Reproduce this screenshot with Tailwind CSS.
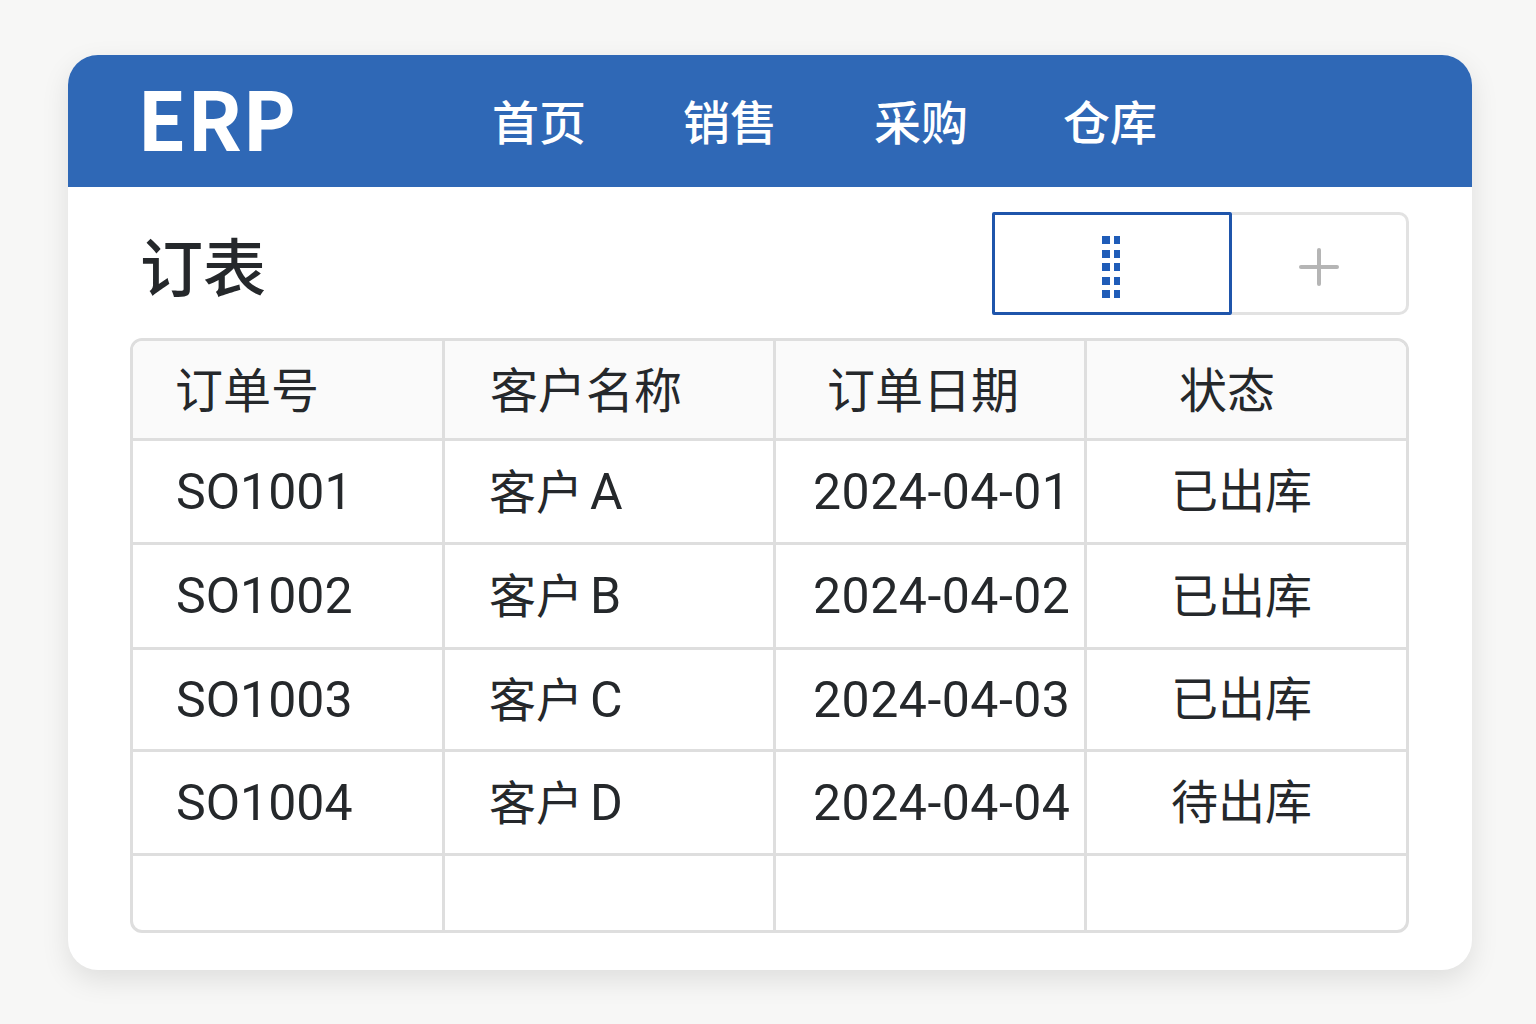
<!DOCTYPE html>
<html lang="zh-CN">
<head>
    <meta charset="UTF-8">
    <title>ERP</title>
    <script src="https://cdn.jsdelivr.net/npm/@tailwindcss/browser@4"></script>
</head>
<body class="bg-[#f7f7f6] font-['Roboto','Noto_Sans_CJK_SC',sans-serif] text-[#25282b]">
    <div class="w-[1536px] h-[1024px] pt-[55px] pl-[68px]">
        <div class="w-[1404px] h-[915px] bg-white rounded-[30px] shadow-[0_10px_28px_rgba(0,0,0,0.10)] overflow-hidden">
            <header class="h-[132px] bg-[#2f68b6] flex items-center text-white">
                <div class="w-[424px] pl-[69px] text-[81px] leading-none font-semibold font-['Noto_Sans_CJK_SC',sans-serif] -mt-[11px]">ERP</div>
                <nav class="flex text-[47px] leading-none font-medium mt-[4px]">
                    <a class="w-[191px]">首页</a>
                    <a class="w-[191px]">销售</a>
                    <a class="w-[189px]">采购</a>
                    <a>仓库</a>
                </nav>
            </header>
            <div class="h-[151px] pl-[72px] pr-[63px] pt-[25px] flex justify-between items-start">
                <h1 class="text-[63px] leading-none font-medium mt-[26px]">订表</h1>
                <div class="flex h-[103px]">
                    <button class="w-[240px] border-[3px] border-[#1f55ab] rounded-[2px] flex items-center justify-center">
                        <svg class="mt-[6px]" width="20" height="62" viewBox="0 0 20 62" fill="#1f5cb8">
                            <rect x="0" y="0" width="8" height="8"/><rect x="12" y="0" width="6" height="8"/>
                            <rect x="0" y="14" width="8" height="8"/><rect x="12" y="14" width="6" height="8"/>
                            <rect x="0" y="27" width="8" height="8"/><rect x="12" y="27" width="6" height="8"/>
                            <rect x="0" y="41" width="8" height="8"/><rect x="12" y="41" width="6" height="8"/>
                            <rect x="0" y="54" width="8" height="8"/><rect x="12" y="54" width="6" height="8"/>
                        </svg>
                    </button>
                    <button class="w-[177px] border-[3px] border-l-0 border-[#e2e2e2] rounded-r-[10px] flex items-center justify-center">
                        <svg class="mt-[6px]" width="40" height="38" viewBox="0 0 40 38" fill="#b5b5b5">
                            <rect x="0" y="17" width="40" height="4" rx="2"/><rect x="18" y="0" width="4" height="38" rx="2"/>
                        </svg>
                    </button>
                </div>
            </div>
            <div class="ml-[62px] w-[1279px] h-[595px] border-[3px] border-[#dedede] rounded-[12px] overflow-hidden grid grid-cols-[312px_331px_311px_1fr] grid-rows-[100px_104px_105px_102px_104px_1fr] text-[47px] leading-none">
                <div class="bg-[#fafafa] border-r-[3px] border-b-[3px] border-[#dedede] flex items-center pl-[42px] pt-[5px] text-[48px]">订单号</div>
                <div class="bg-[#fafafa] border-r-[3px] border-b-[3px] border-[#dedede] flex items-center pl-[45px] pt-[5px] text-[48px]">客户名称</div>
                <div class="bg-[#fafafa] border-r-[3px] border-b-[3px] border-[#dedede] flex items-center pl-[51px] pt-[5px] text-[48px]">订单日期</div>
                <div class="bg-[#fafafa] border-b-[3px] border-[#dedede] flex items-center pl-[92px] pt-[5px] text-[48px]">状态</div>

                <div class="border-r-[3px] border-b-[3px] border-[#dedede] flex items-center pl-[43px] text-[50px]">SO1001</div>
                <div class="border-r-[3px] border-b-[3px] border-[#dedede] flex items-center pl-[44px]"><div>客户<span class="ml-[7px] text-[50px]">A</span></div></div>
                <div class="border-r-[3px] border-b-[3px] border-[#dedede] flex items-center pl-[37px] text-[50px] tracking-[0.5px] whitespace-nowrap">2024-04-01</div>
                <div class="border-b-[3px] border-[#dedede] flex items-center pl-[84px]">已出库</div>

                <div class="border-r-[3px] border-b-[3px] border-[#dedede] flex items-center pl-[43px] text-[50px]">SO1002</div>
                <div class="border-r-[3px] border-b-[3px] border-[#dedede] flex items-center pl-[44px]"><div>客户<span class="ml-[7px] text-[50px]">B</span></div></div>
                <div class="border-r-[3px] border-b-[3px] border-[#dedede] flex items-center pl-[37px] text-[50px] tracking-[0.5px] whitespace-nowrap">2024-04-02</div>
                <div class="border-b-[3px] border-[#dedede] flex items-center pl-[84px]">已出库</div>

                <div class="border-r-[3px] border-b-[3px] border-[#dedede] flex items-center pl-[43px] text-[50px]">SO1003</div>
                <div class="border-r-[3px] border-b-[3px] border-[#dedede] flex items-center pl-[44px]"><div>客户<span class="ml-[7px] text-[50px]">C</span></div></div>
                <div class="border-r-[3px] border-b-[3px] border-[#dedede] flex items-center pl-[37px] text-[50px] tracking-[0.5px] whitespace-nowrap">2024-04-03</div>
                <div class="border-b-[3px] border-[#dedede] flex items-center pl-[84px]">已出库</div>

                <div class="border-r-[3px] border-b-[3px] border-[#dedede] flex items-center pl-[43px] text-[50px]">SO1004</div>
                <div class="border-r-[3px] border-b-[3px] border-[#dedede] flex items-center pl-[44px]"><div>客户<span class="ml-[7px] text-[50px]">D</span></div></div>
                <div class="border-r-[3px] border-b-[3px] border-[#dedede] flex items-center pl-[37px] text-[50px] tracking-[0.5px] whitespace-nowrap">2024-04-04</div>
                <div class="border-b-[3px] border-[#dedede] flex items-center pl-[84px]">待出库</div>

                <div class="border-r-[3px] border-[#dedede]"></div>
                <div class="border-r-[3px] border-[#dedede]"></div>
                <div class="border-r-[3px] border-[#dedede]"></div>
                <div></div>
            </div>
        </div>
    </div>
</body>
</html>
